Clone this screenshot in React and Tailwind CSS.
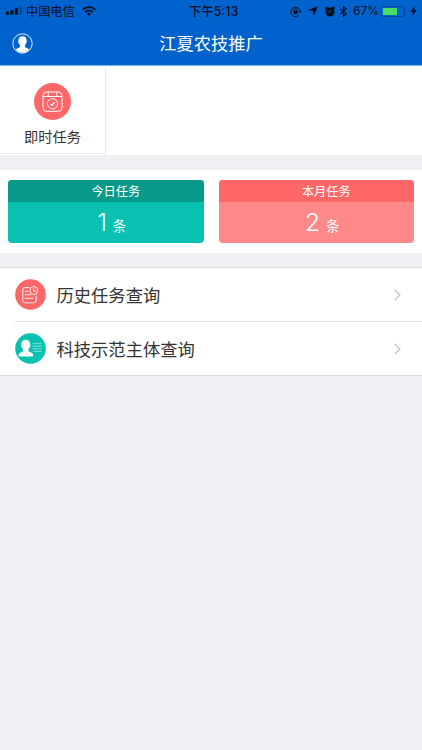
const tasks = [
  { title: '今日任务', count: 1, head: 'bg-[#07998a]', body: 'bg-[#08c1b1]' },
  { title: '本月任务', count: 2, head: 'bg-[#ff6667]', body: 'bg-[#ff8889]' },
];

const SignalIcon = () => (
  <svg className="w-4 h-[9px]" viewBox="0 0 16 9" fill="#03101f">
    <rect x="0" y="5.5" width="3" height="3.3" rx="0.6" />
    <rect x="4.4" y="4" width="3" height="4.8" rx="0.6" />
    <rect x="8.8" y="2" width="3" height="6.8" rx="0.6" />
    <rect x="13.2" y="0" width="2.8" height="8.8" rx="0.6" opacity="0.3" />
  </svg>
);

const WifiIcon = () => (
  <svg className="w-[14px] h-[10px]" viewBox="0 0 14 10" fill="none" stroke="#03101f" strokeWidth="1.9">
    <path d="M0.7 3.7a8.9 8.9 0 0 1 12.6 0" />
    <path d="M3.1 6.2a5.5 5.5 0 0 1 7.8 0" />
    <path d="M7 9.9 4.9 7.8a3 3 0 0 1 4.2 0z" fill="#03101f" stroke="none" />
  </svg>
);

const LockIcon = () => (
  <svg className="w-3 h-[11px]" viewBox="0 0 12 11" fill="none" stroke="#03101f">
    <path d="M8.4 9.4A4.7 4.7 0 1 1 10 5.2" strokeWidth="1" />
    <path d="M8.3 4.9h3.3L10 7.1z" fill="#03101f" stroke="none" />
    <path d="M4.2 5V3.8a1.3 1.3 0 0 1 2.6 0V5" strokeWidth="0.9" />
    <rect x="3.4" y="4.7" width="4.2" height="3.2" rx="0.4" fill="#03101f" stroke="none" />
  </svg>
);

const LocationIcon = () => (
  <svg className="w-[10px] h-[10px]" viewBox="0 0 9 9" fill="#03101f">
    <path d="M9 0 5.2 9 4.4 4.6 0 3.8z" />
  </svg>
);

const AlarmIcon = () => (
  <svg className="w-[10px] h-[11px]" viewBox="0 0 10 11" fill="#03101f">
    <circle cx="5" cy="6" r="4.5" />
    <circle cx="1.7" cy="2" r="1.6" />
    <circle cx="8.3" cy="2" r="1.6" />
    <path d="M5 3.6v2.7H3.2" fill="none" stroke="#0062cc" strokeWidth="0.8" />
  </svg>
);

const BluetoothIcon = () => (
  <svg className="w-[7px] h-[11px]" viewBox="0 0 7 11" fill="none" stroke="#03101f" strokeWidth="1.1">
    <path d="M0.5 3 6.2 8 3.5 10.3V0.7L6.2 3 0.5 8" />
  </svg>
);

const BatteryIcon = () => (
  <svg className="w-[26px] h-[11px]" viewBox="0 0 26 11">
    <rect x="0.5" y="0.5" width="22.8" height="10" rx="1.8" fill="none" stroke="#04458f" />
    <rect x="1.8" y="1.9" width="14.2" height="7.2" rx="0.5" fill="#4bdb63" />
    <path d="M24.4 3.6q1.3 1.9 0 3.8z" fill="#04458f" />
  </svg>
);

const BoltIcon = () => (
  <svg className="w-[7px] h-[10px]" viewBox="0 0 6 9" fill="#03101f">
    <path d="M4.4 0 0 5.1h2.5L1.6 9 6 3.7H3.5z" />
  </svg>
);

const AvatarIcon = () => (
  <svg className="w-[21px] h-[21px]" viewBox="0 0 21 21">
    <circle cx="10.5" cy="10.5" r="9.7" fill="none" stroke="#fff" strokeWidth="0.9" />
    <path
      d="M10.5 3.2c2.6 0 4 1.6 4 3.9 0 .7.5.9.3 1.9-.1.7-.6.8-.8 1.4-.3.9-.6 1.4-1 1.8v1.6c.3 1 3.2 1.5 4.3 2.7a9 9 0 0 1-13.6 0c1.1-1.2 4-1.7 4.3-2.7v-1.6c-.4-.4-.7-.9-1-1.8-.2-.6-.7-.7-.8-1.4-.2-1 .3-1.2.3-1.9 0-2.3 1.4-3.9 4-3.9z"
      fill="#fff"
    />
  </svg>
);

const InstantTaskIcon = () => (
  <svg className="w-[37px] h-[37px]" viewBox="0 0 37 37" fill="none" stroke="#fff" strokeWidth="1">
    <circle cx="18.5" cy="18.5" r="18.5" fill="#ff6667" stroke="none" />
    <rect x="9" y="9" width="19" height="19.3" rx="3.6" />
    <path d="M9 13.5h19M14.2 9.2v4.1M22.8 9.2v4.1" />
    <circle cx="18.5" cy="20.7" r="5.1" />
    <path d="m16.5 20.9 1.4 1.5 2.9-3.4" strokeWidth="1.2" />
  </svg>
);

const HistoryIcon = () => (
  <svg className="w-[31px] h-[31px]" viewBox="0 0 31 31" fill="none" stroke="#fff" strokeWidth="0.9">
    <circle cx="15.5" cy="15.5" r="15.3" fill="#ff6667" stroke="none" />
    <path d="M14.3 8.6H9.8a2 2 0 0 0-2 2v11.2a2 2 0 0 0 2 2h9.4a2 2 0 0 0 2-2v-5.2" />
    <circle cx="18.8" cy="11.6" r="4" />
    <path d="M18.6 8.9v3.1h2.5M9.8 12.3h3.8M9.8 15.8h6M9.8 19.3h8.6" />
  </svg>
);

const SubjectIcon = () => (
  <svg className="w-[31px] h-[31px]" viewBox="0 0 31 31">
    <circle cx="15.5" cy="15.5" r="15.3" fill="#08c1b1" />
    <path
      d="M10.6 6.8c2.9 0 4.5 1.8 4.5 4.4 0 .6.5.8.3 1.7-.1.7-.6.8-.8 1.4-.3 1-.7 1.6-1.2 2.1v1.5c.5 1.1 4.7 1.5 4.8 4.2 0 .8-.4 1.3-1.2 1.3H4.7c-.8 0-1.2-.5-1.2-1.3.1-2.7 4-3.1 4.5-4.2v-1.5c-.5-.5-.9-1.1-1.2-2.1-.2-.6-.7-.7-.8-1.4-.2-.9.3-1.1.3-1.7 0-2.6 1.4-4.4 4.3-4.4z"
      fill="#fff"
    />
    <path d="M17.5 10.7h9.3M17.5 13.3h9.3M17.5 15.9h9.3M18.5 18.4h8.3" stroke="#8fe2da" strokeWidth="0.9" />
  </svg>
);

const ChevronIcon = () => (
  <svg className="w-[7px] h-3" viewBox="0 0 7 12" fill="none" stroke="#bcbcc1" strokeWidth="1.1">
    <path d="m0.6 0.8 5.4 5.2-5.4 5.2" />
  </svg>
);

const StatusBar = () => (
  <div className="flex h-[22px] items-center font-['Inter','Noto_Sans_CJK_SC',sans-serif] text-[12.2px] leading-none text-[#03101f]">
    <div className="flex flex-1 items-center pl-1.5">
      <SignalIcon />
      <span className="ml-1 pt-[2px]">中国电信</span>
      <span className="ml-[7px]"><WifiIcon /></span>
    </div>
    <span className="shrink-0 pt-[2px] pl-1 text-[12.5px] font-medium">下午5:13</span>
    <div className="flex flex-1 items-center justify-end pr-[5px]">
      <LockIcon />
      <span className="ml-[6px]"><LocationIcon /></span>
      <span className="ml-[7px]"><AlarmIcon /></span>
      <span className="ml-[5px]"><BluetoothIcon /></span>
      <span className="ml-[6px] text-[12px]">67%</span>
      <span className="ml-[2px]"><BatteryIcon /></span>
      <span className="ml-[3px]"><BoltIcon /></span>
    </div>
  </div>
);

const ListRow = ({ icon, label }) => (
  <div className="flex h-[53px] items-center pr-[21px]">
    {icon}
    <span className="ml-[10.5px] flex-1 pt-[5px] text-[17.3px] leading-none text-[#333]">{label}</span>
    <ChevronIcon />
  </div>
);

const App = () => {
  return (
    <div className="min-h-[750px] w-full bg-[#efeff4] font-['Liberation_Sans','Noto_Sans_CJK_SC',sans-serif]">
      <header className="h-[66px] border-b border-[#7fb0e5] bg-[#0062cc]">
        <StatusBar />
        <div className="grid h-[42px] grid-cols-[1fr_auto_1fr] items-center px-3">
          <AvatarIcon />
          <h1 className="pt-[3px] text-[17.3px] leading-none text-white">江夏农技推广</h1>
        </div>
      </header>

      <section className="h-[89px] bg-white">
        <div className="flex h-[88px] w-[106px] flex-col items-center border-r border-b border-[#ebebef] pt-[17px]">
          <InstantTaskIcon />
          <span className="mt-[10px] text-[14.2px] leading-none text-[#333]">即时任务</span>
        </div>
      </section>

      <section className="mt-[15px] grid h-[83px] grid-cols-2 gap-[15px] bg-white px-2 pt-[10px]">
        {tasks.map((task) => (
          <div key={task.title} className={`h-[63px] overflow-hidden rounded-[4px] text-center text-white ${task.body}`}>
            <div className={`h-[22px] pl-5 text-[12.2px] leading-[24px] ${task.head}`}>{task.title}</div>
            <div className="flex h-[41px] items-center justify-center gap-[6px] pl-3 leading-none">
              <span className="font-['Inter',sans-serif] text-[24.5px] font-light">{task.count}</span>
              <span className="pt-[8px] text-[13.5px]">条</span>
            </div>
          </div>
        ))}
      </section>

      <section className="mt-[14px] border-y border-[#dcdce0] bg-white pl-[15px]">
        <ListRow icon={<HistoryIcon />} label="历史任务查询" />
        <div className="h-px bg-[#dfdfe4]" />
        <ListRow icon={<SubjectIcon />} label="科技示范主体查询" />
      </section>
    </div>
  );
};

export default App;
